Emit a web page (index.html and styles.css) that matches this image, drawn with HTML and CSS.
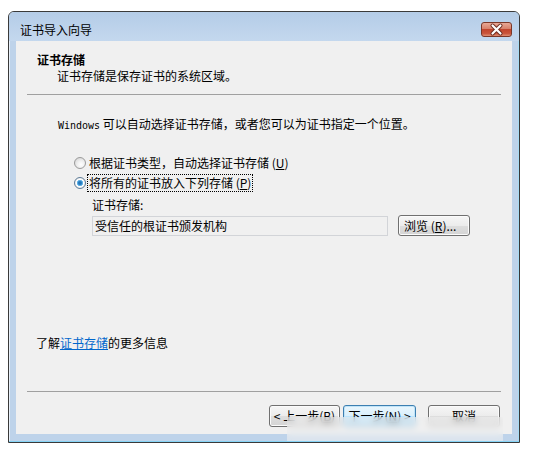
FILE: index.html
```html
<!DOCTYPE html>
<html lang="zh-CN">
<head>
<meta charset="utf-8">
<title>证书导入向导</title>
<link rel="stylesheet" href="styles.css">
</head>
<body>
<div class="screen">
  <div class="window">
    <div class="titlebar">
      <span class="title">证书导入向导</span>
      <div class="close">
        <svg width="31" height="15" viewBox="0 0 31 15">
          <path d="M11.5 3.5 L19.5 11.5 M19.5 3.5 L11.5 11.5" stroke="#6b2a1e" stroke-width="4" stroke-linecap="round"/>
          <path d="M11.5 3.5 L19.5 11.5 M19.5 3.5 L11.5 11.5" stroke="#ffffff" stroke-width="2.2" stroke-linecap="round"/>
        </svg>
      </div>
    </div>
    <div class="client">
      <div class="header">
        <div class="h-title">证书存储</div>
        <div class="h-sub">证书存储是保存证书的系统区域。</div>
      </div>
      <div class="sep"></div>
      <div class="content">
        <div class="intro"><span class="mono">Windows</span> 可以自动选择证书存储，或者您可以为证书指定一个位置。</div>
        <div class="radios">
          <div class="radio"><span class="dot"></span><span class="rlabel">根据证书类型，自动选择证书存储 (<u>U</u>)</span></div>
          <div class="radio checked"><span class="dot"></span><span class="rlabel focus">将所有的证书放入下列存储 (<u>P</u>)</span></div>
        </div>
        <div class="store">
          <div class="label">证书存储:</div>
          <div class="store-row">
            <div class="textbox">受信任的根证书颁发机构</div>
            <div class="btn browse">浏览 (<u>R</u>)...</div>
          </div>
        </div>
      </div>
      <div class="more">了解<a class="link" href="#">证书存储</a>的更多信息</div>
      <div class="sep bottom"></div>
      <div class="footer">
        <div class="btn back">&lt; 上一步(<u>B</u>)</div>
        <div class="btn next">下一步(<u>N</u>) &gt;</div>
        <div class="btn cancel">取消</div>
      </div>
    </div>
    <div class="blur"></div>
  </div>
</div>
</body>
</html>
```
FILE: styles.css
```css
* { box-sizing: border-box; }
html, body { margin: 0; padding: 0; background: #ffffff; }
body {
  font-family: "Noto Sans CJK SC", "DejaVu Sans", sans-serif;
  font-size: 12px;
  color: #000;
}
.screen {
  width: 535px;
  height: 455px;
  padding: 11px 0 0 8px;
}
.window {
  position: relative;
  width: 512px;
  height: 432px;
  border: 1px solid #3a3a3a;
  border-radius: 6px 6px 0 0;
  background: #bed3ea;
  box-shadow: inset 0 -1px 0 #86d3f5, inset -1px 0 0 #a6dcf5, inset 1px 1px 0 #e8f0f9;
  padding: 0 7px 7px 7px;
}
.titlebar {
  height: 29px;
  padding-top: 6px;
  display: flex;
  align-items: center;
  justify-content: space-between;
  background: linear-gradient(#b4cce7, #c4d8ee);
  margin: 0 -7px;
  padding-left: 11px;
  padding-right: 7px;
  border-radius: 5px 5px 0 0;
}
.title {
  font-size: 12px;
  line-height: 16px;
  color: #000;
}
.close {
  width: 31px;
  height: 15px;
  border: 1px solid #7b3728;
  border-radius: 3px;
  background: linear-gradient(#e8a896 0%, #d7806a 45%, #c2452d 50%, #c9543b 80%, #df8f74 100%);
  display: flex;
  align-items: center;
  justify-content: center;
}
.close svg { display: block; margin: -1px; }
.client {
  width: 496px;
  height: 393px;
  background: #f0f0f0;
}
.header { padding: 11px 0 0 21px; }
.h-title { font-weight: bold; line-height: 16px; }
.h-sub { padding-left: 20px; line-height: 16px; }
.sep {
  height: 1px;
  margin: 10px 11px 0 11px;
  background: #a0a0a0;
}
.content { padding-left: 42px; }
.intro { margin-top: 21px; line-height: 16px; }
.mono { font-family: "DejaVu Sans Mono", "Liberation Mono", monospace; font-size: 10px; }
.radios { margin-top: 19px; margin-left: 16px; }
.radio {
  height: 20px;
  display: flex;
  align-items: center;
}
.dot {
  width: 12px;
  height: 12px;
  border-radius: 50%;
  border: 1px solid #9a9a9a;
  background: radial-gradient(circle at 60% 65%, #ffffff 0%, #f0f0f0 40%, #cfcfcf 100%);
  margin-right: 3px;
  flex: none;
}
.checked .dot {
  background: radial-gradient(circle at 50% 50%, #1f6fb0 0%, #2c83c6 25%, #7cc3ee 42%, #ffffff 50%, #e6e6e6 80%, #cfcfcf 100%);
  border-color: #5c7a96;
}
.rlabel { line-height: 16px; }
.focus {
  outline: 1px dotted #000;
  outline-offset: 0;
  padding: 0 1px;
  margin-left: -1px;
}
.store { margin-left: 34px; }
.label { margin-top: 4px; line-height: 16px; }
.store-row {
  margin-top: 2px;
  display: flex;
  align-items: center;
}
.textbox {
  width: 296px;
  height: 20px;
  border: 1px solid #d2d4d8;
  background: #f0f0f0;
  padding-left: 2px;
  line-height: 18px;
}
.btn {
  height: 21px;
  border: 1px solid #707070;
  border-radius: 3px;
  background: linear-gradient(#f6f6f6 0%, #ececec 50%, #dedede 51%, #d4d4d4 100%);
  box-shadow: inset 0 0 0 1px #fbfbfb;
  display: flex;
  align-items: center;
  justify-content: center;
  line-height: 16px;
}
.browse {
  width: 72px;
  margin-left: 10px;
  justify-content: flex-start;
  padding-left: 5px;
}
.more {
  margin-top: 99px;
  padding-left: 20px;
  line-height: 16px;
}
.link { color: #0066cc; text-decoration: underline; }
.sep.bottom { margin-top: 40px; }
.footer {
  margin-top: 13px;
  display: flex;
  justify-content: flex-end;
  padding-right: 12px;
}
.footer .btn { height: 22px; }
.back { width: 71px; }
.next {
  width: 73px;
  margin-left: 3px;
  border-color: #3c7fb1;
  background: linear-gradient(#eaf6fd 0%, #d9f0fc 50%, #bee6fd 51%, #a7d9f5 100%);
  box-shadow: inset 0 0 0 1px #c0e4f8;
}
.cancel { width: 72px; margin-left: 12px; }
.blur {
  position: absolute;
  left: 278px;
  top: 405px;
  width: 216px;
  height: 24px;
  background: rgba(240, 240, 240, 0.55);
  backdrop-filter: blur(3px);
}
```
